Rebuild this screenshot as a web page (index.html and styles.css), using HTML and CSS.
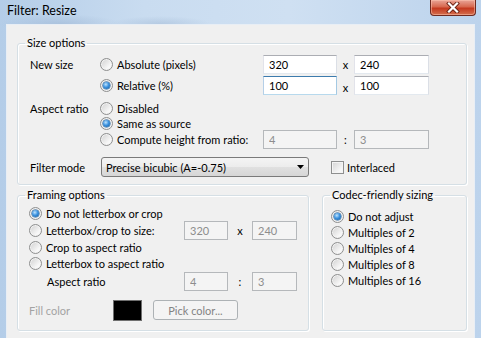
FILE: index.html
```html
<!DOCTYPE html>
<html lang="en">
<head>
    <meta charset="UTF-8">
    <title>Filter: Resize</title>
    <link rel="stylesheet" href="styles.css">
</head>
<body>
    <div class="window">
        <div class="titlebar">
            <span class="title">Filter: Resize</span>
            <span class="close">
                <svg width="14" height="11" viewBox="0 0 14 11">
                    <path d="M3 1.5 L11 9.5 M11 1.5 L3 9.5" stroke="#6b2214" stroke-width="4" stroke-linecap="square"/>
                    <path d="M3 1.5 L11 9.5 M11 1.5 L3 9.5" stroke="#ffffff" stroke-width="2.2" stroke-linecap="square"/>
                </svg>
            </span>
        </div>

        <div class="client">
            <!-- Size options -->
            <fieldset class="group size-group">
                <legend>Size options</legend>
                <div class="row r1">
                    <span class="lbl">New size</span>
                    <label class="opt"><span class="radio"></span>Absolute (pixels)</label>
                    <input class="edit" type="text" value="320">
                    <span class="sep">x</span>
                    <input class="edit wide" type="text" value="240">
                </div>
                <div class="row r2">
                    <span class="lbl"></span>
                    <label class="opt"><span class="radio on"></span>Relative (%)</label>
                    <input class="edit focus" type="text" value="100">
                    <span class="sep low">x</span>
                    <input class="edit wide" type="text" value="100">
                </div>
                <div class="row r3">
                    <span class="lbl">Aspect ratio</span>
                    <label class="opt"><span class="radio"></span>Disabled</label>
                </div>
                <div class="row r4">
                    <span class="lbl"></span>
                    <label class="opt"><span class="radio on"></span>Same as source</label>
                </div>
                <div class="row r5">
                    <span class="lbl"></span>
                    <label class="opt"><span class="radio"></span>Compute height from ratio:</label>
                    <input class="edit" type="text" value="4" disabled>
                    <span class="sep">:</span>
                    <input class="edit wide" type="text" value="3" disabled>
                </div>
                <div class="row r6">
                    <span class="lbl">Filter mode</span>
                    <div class="combo">
                        <span>Precise bicubic (A=-0.75)</span>
                        <svg width="7" height="4" viewBox="0 0 7 4"><path d="M0 0 H7 L3.5 4 Z" fill="#000"/></svg>
                    </div>
                    <label class="check"><span class="box"></span>Interlaced</label>
                </div>
            </fieldset>

            <div class="lower">
                <!-- Framing options -->
                <fieldset class="group framing">
                    <legend>Framing options</legend>
                    <div class="frow f1">
                        <label class="opt"><span class="radio on"></span>Do not letterbox or crop</label>
                    </div>
                    <div class="frow f2">
                        <label class="opt fixed"><span class="radio"></span>Letterbox/crop to size:</label>
                        <input class="edit small" type="text" value="320" disabled>
                        <span class="sep2">x</span>
                        <input class="edit small" type="text" value="240" disabled>
                    </div>
                    <div class="frow f3">
                        <label class="opt"><span class="radio"></span>Crop to aspect ratio</label>
                    </div>
                    <div class="frow f4">
                        <label class="opt"><span class="radio"></span>Letterbox to aspect ratio</label>
                    </div>
                    <div class="frow f5">
                        <span class="sublbl">Aspect ratio</span>
                        <input class="edit small" type="text" value="4" disabled>
                        <span class="sep2">:</span>
                        <input class="edit small" type="text" value="3" disabled>
                    </div>
                    <div class="frow f6">
                        <span class="fill-lbl">Fill color</span>
                        <span class="swatch"></span>
                        <span class="btn">Pick color...</span>
                    </div>
                </fieldset>

                <!-- Codec-friendly sizing -->
                <fieldset class="group codec">
                    <legend>Codec-friendly sizing</legend>
                    <label class="opt crow"><span class="radio on"></span>Do not adjust</label>
                    <label class="opt crow"><span class="radio"></span>Multiples of 2</label>
                    <label class="opt crow"><span class="radio"></span>Multiples of 4</label>
                    <label class="opt crow"><span class="radio"></span>Multiples of 8</label>
                    <label class="opt crow"><span class="radio"></span>Multiples of 16</label>
                </fieldset>
            </div>
        </div>
    </div>
</body>
</html>
```

FILE: styles.css
```css
:root {
    --face: #f0f0f0;
    --group-line: #d5dfe5;
    --text: #000000;
    --text-off: #8d8d8d;
}

body {
    margin: 0;
    font-family: Lato, 'Liberation Sans', sans-serif;
    font-size: 11px;
    color: var(--text);
}

/* window frame */
.window {
    width: 481px;
    height: 338px;
    overflow: hidden;
    display: flex;
    flex-direction: column;
    background:
        radial-gradient(ellipse 60px 10px at 60px 24px, rgba(150, 175, 205, 0.45), transparent),
        radial-gradient(ellipse 50px 8px at 160px 24px, rgba(150, 175, 205, 0.4), transparent),
        linear-gradient(90deg, #b4cde8 0%, #c9dcf0 30%, #cfe0f2 60%, #bcd3ec 100%);
}

.titlebar {
    height: 24px;
    flex: none;
    display: flex;
    justify-content: space-between;
    align-items: flex-start;
}

.title {
    padding: 4px 0 0 7px;
    font-size: 12.5px;
    line-height: 14px;
}

.close {
    width: 44px;
    height: 15px;
    margin-right: 5px;
    display: flex;
    align-items: center;
    justify-content: center;
    border: 1px solid #6e2a20;
    border-top: none;
    border-radius: 0 0 4px 4px;
    background: linear-gradient(#e9a597 0%, #d7684f 45%, #c4391f 55%, #d4704f 100%);
    box-shadow: inset 0 0 0 1px rgba(255, 200, 180, 0.5);
}

.client {
    flex: 1;
    margin: 0 6px 0 6px;
    background: var(--face);
    border: 1px solid #e8eef5;
    border-bottom: none;
}

/* group boxes */
.group {
    box-sizing: border-box;
    margin: 0;
    padding: 0;
    min-width: 0;
    border: 1px solid var(--group-line);
    border-radius: 3px;
    box-shadow: inset 1px 1px 0 #fff, 1px 1px 0 #fff;
}

.group legend {
    padding: 0 2px;
    height: 16px;
    line-height: 16px;
}

.size-group {
    margin: 10px 7px 0 10px;
    padding: 3px 0 7px 12px;
}

.size-group legend { margin-left: -5px; }
.framing legend { margin-left: -4px; }
.codec legend { margin-left: -1px; }

.row {
    display: flex;
    align-items: center;
}

.r1, .r2 { height: 21px; }
.r3 { height: 16px; margin-top: 4px; }
.r4 { height: 14px; }
.r5 { height: 19px; }
.r6 { height: 20px; margin-top: 8px; }

.lbl {
    width: 70px;
    flex: none;
}

.opt {
    display: flex;
    align-items: center;
    gap: 4px;
    white-space: nowrap;
}

.row .opt {
    width: 163px;
    flex: none;
}

/* radio + checkbox, Win7 look */
.radio {
    width: 13px;
    height: 13px;
    box-sizing: border-box;
    flex: none;
    border-radius: 50%;
    border: 1px solid #8e8f8f;
    background: linear-gradient(135deg, #cfcfcf, #f7f7f7 70%, #ffffff);
    box-shadow: inset 0 0 0 1px #f2f2f2;
    display: flex;
    align-items: center;
    justify-content: center;
}

.radio.on::after {
    content: '';
    width: 7px;
    height: 7px;
    border-radius: 50%;
    background: radial-gradient(circle at 40% 35%, #bfe4fd 0%, #3d93e0 45%, #0e5596 100%);
    box-shadow: 0 0 0 0.5px #1c5a93;
}

.check {
    display: flex;
    align-items: center;
    gap: 3px;
    margin-left: 22px;
}

.box {
    width: 13px;
    height: 13px;
    box-sizing: border-box;
    border: 1px solid #8e8f8f;
    background: linear-gradient(135deg, #d4d4d4, #f7f7f7 75%);
    box-shadow: inset 0 0 0 1px #f4f4f4;
}

/* text boxes */
.edit {
    width: 74px;
    height: 19px;
    box-sizing: border-box;
    margin: 0;
    padding: 0 0 0 5px;
    border: 1px solid;
    border-color: #abadb3 #dbdfe6 #e3e9ef #e2e3ea;
    background: #fff;
    font: inherit;
    color: var(--text);
    outline: none;
}

.edit.wide { width: 75px; }

.edit.focus {
    border-color: #3d7bad #a4c9e3 #b7d9ed #b5cfe7;
}

.edit:disabled {
    background: #f4f4f4;
    border-color: #b5b8bb;
    color: var(--text-off);
}

.sep {
    width: 17px;
    text-align: center;
}

.sep.low { padding-top: 3px; }

.combo {
    width: 208px;
    height: 20px;
    box-sizing: border-box;
    margin-left: 1px;
    padding: 0 4px 0 4px;
    display: flex;
    align-items: center;
    justify-content: space-between;
    border: 1px solid #7a7a7a;
    border-radius: 3px;
    background: linear-gradient(#f4f4f4 0%, #ececec 50%, #e0e0e0 51%, #d6d6d6 100%);
}

/* lower groups */
.lower {
    display: flex;
    gap: 13px;
    margin: 2px 7px 0 10px;
}

.framing {
    width: 292px;
    flex: none;
    padding: 2px 0 9px 11px;
}

.codec {
    flex: 1;
    padding: 5px 0 0 8px;
}

.frow {
    display: flex;
    align-items: center;
}

.f1, .f4 { height: 16px; }
.f2, .f5 { height: 19px; }
.f3 { height: 15px; }
.f5 { margin-top: 1px; }
.f6 { height: 22px; margin-top: 8px; }

.opt.fixed {
    width: 155px;
    flex: none;
}

.sublbl {
    width: 137px;
    flex: none;
    padding-left: 18px;
}

.edit.small { width: 44px; }
.edit.small + .sep2 + .edit.small { width: 45px; }

.sep2 {
    width: 24px;
    text-align: center;
}

.fill-lbl {
    width: 84px;
    color: #a3a3a3;
}

.swatch {
    width: 29px;
    height: 21px;
    box-sizing: border-box;
    border: 1px solid #6f6f6f;
    background: #000;
}

.btn {
    width: 85px;
    height: 20px;
    box-sizing: border-box;
    margin-left: 11px;
    display: flex;
    align-items: center;
    justify-content: center;
    border: 1px solid #adb2b5;
    border-radius: 3px;
    background: #f4f4f4;
    color: #838383;
}

.crow {
    height: 16px;
}
```
